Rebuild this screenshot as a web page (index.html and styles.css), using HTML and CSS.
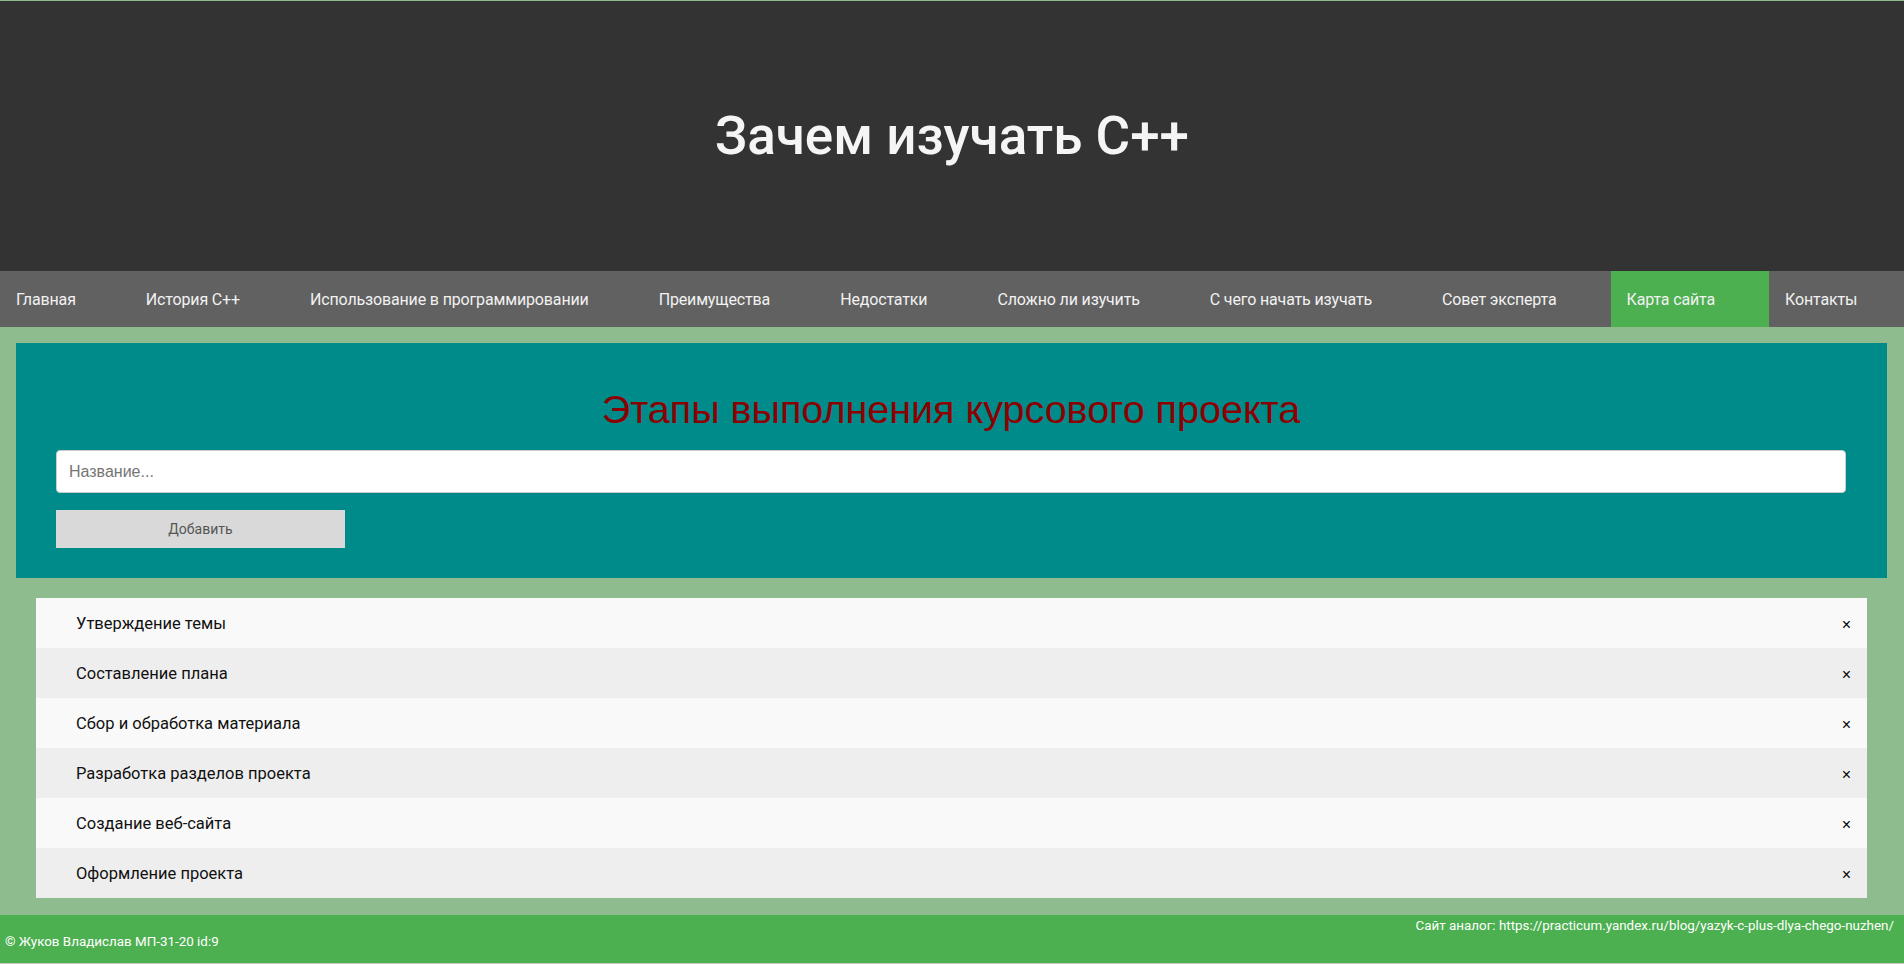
FILE: index.html
```html
<!DOCTYPE html>
<html lang="ru">
<head>
<meta charset="utf-8">
<title>Зачем изучать С++</title>
<link rel="stylesheet" href="styles.css">
</head>
<body>
<header class="hero">
  <h1 class="hero-title">Зачем изучать С++</h1>
</header>
<nav class="menu">
  <a class="menu-link" href="#">Главная</a>
  <a class="menu-link" href="#">История С++</a>
  <a class="menu-link" href="#">Использование в программировании</a>
  <a class="menu-link" href="#">Преимущества</a>
  <a class="menu-link" href="#">Недостатки</a>
  <a class="menu-link" href="#">Сложно ли изучить</a>
  <a class="menu-link" href="#">С чего начать изучать</a>
  <a class="menu-link" href="#">Совет эксперта</a>
  <a class="menu-link active" href="#">Карта сайта</a>
  <a class="menu-link" href="#">Контакты</a>
</nav>
<main class="content">
  <section class="todo-box">
    <h2 class="todo-title">Этапы выполнения курсового проекта</h2>
    <input class="todo-input" type="text" placeholder="Название...">
    <button class="todo-add" type="button">Добавить</button>
  </section>
  <ul class="todo-list">
    <li class="todo-item"><span class="todo-text">Утверждение темы</span><span class="todo-close">×</span></li>
    <li class="todo-item"><span class="todo-text">Составление плана</span><span class="todo-close">×</span></li>
    <li class="todo-item"><span class="todo-text">Сбор и обработка материала</span><span class="todo-close">×</span></li>
    <li class="todo-item"><span class="todo-text">Разработка разделов проекта</span><span class="todo-close">×</span></li>
    <li class="todo-item"><span class="todo-text">Создание веб-сайта</span><span class="todo-close">×</span></li>
    <li class="todo-item"><span class="todo-text">Оформление проекта</span><span class="todo-close">×</span></li>
  </ul>
</main>
<footer class="footer">
  <div class="footer-analog">Сайт аналог: https://practicum.yandex.ru/blog/yazyk-c-plus-dlya-chego-nuzhen/</div>
  <div class="footer-copy">© Жуков Владислав МП-31-20 id:9</div>
</footer>
</body>
</html>
```
FILE: styles.css
```css
* { box-sizing: border-box; }

html, body {
  margin: 0;
  background: #8fbc8f;
}

body {
  padding-top: 1px;
  font-family: Roboto, "Noto Sans", sans-serif;
}

.hero {
  height: 270px;
  background: #333333;
  display: flex;
  align-items: center;
  justify-content: center;
}

.hero-title {
  margin: 0;
  font-size: 53px;
  font-weight: 500;
  color: #f5f5f5;
}

.menu {
  display: flex;
  height: 56px;
  background: #616161;
}

.menu-link {
  display: block;
  padding: 1px 54px 0 16px;
  line-height: 55px;
  font-size: 16px;
  letter-spacing: -0.15px;
  color: #f2f2f2;
  text-decoration: none;
  white-space: nowrap;
}

.menu-link.active {
  background: #4caf50;
}

.content {
  padding: 16px 17px 17px 16px;
}

.todo-box {
  background: #008b8b;
  padding: 44px 41px 30px 40px;
}

.todo-title {
  margin: 0 0 18px;
  text-align: center;
  font-family: "Liberation Sans", Arial, sans-serif;
  font-size: 39.5px;
  font-weight: normal;
  color: #8b0000;
}

.todo-input {
  display: block;
  width: 100%;
  height: 43px;
  padding: 0 12px;
  border: 1px solid #cccccc;
  border-radius: 4px;
  background: #ffffff;
  font-family: "Liberation Sans", Arial, sans-serif;
  font-size: 16px;
  color: #333;
}

.todo-input::placeholder {
  color: #757575;
}

.todo-add {
  display: block;
  width: 289px;
  height: 38px;
  margin-top: 17px;
  border: none;
  background: #d9d9d9;
  color: #555555;
  font-family: Roboto, sans-serif;
  font-size: 14px;
}

.todo-list {
  list-style: none;
  margin: 20px 20px 0;
  padding: 0;
}

.todo-item {
  display: flex;
  align-items: center;
  justify-content: space-between;
  height: 50px;
  padding: 0 16px 0 40px;
  background: #f9f9f9;
  font-size: 16.5px;
  color: #111;
}

.todo-item:nth-child(even) {
  background: #eeeeee;
}

.todo-close {
  margin-top: 3px;
  font-family: "Liberation Sans", Arial, sans-serif;
  font-size: 16px;
  color: #000;
}

.footer {
  display: flex;
  flex-direction: column;
  height: 50px;
  padding: 3px 10px 0 5px;
  background: #4caf50;
  border-bottom: 2px solid #c8c8c8;
  color: #ffffff;
  font-size: 13.4px;
  line-height: 16px;
}

.footer-analog {
  text-align: right;
}
```
